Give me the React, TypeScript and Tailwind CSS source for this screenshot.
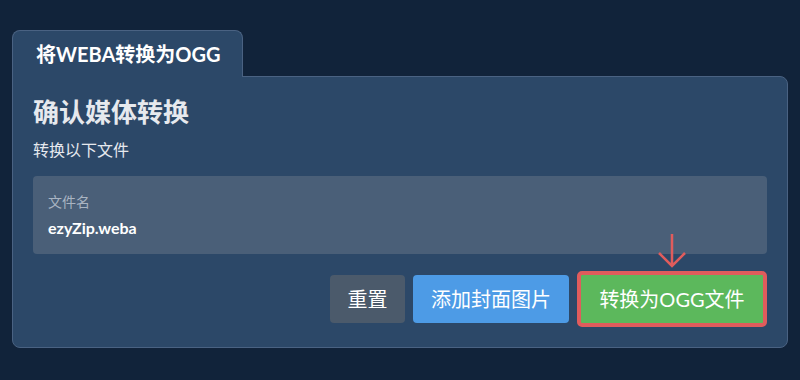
import React from "react";

export default function App() {
  const font = { fontFamily: 'Lato, "Noto Sans CJK SC", sans-serif' };
  return (
    <div className="w-[800px] h-[380px] bg-[#11233a] pt-[30px] px-[12px]" style={font}>
      <div className="flex">
        <div className="h-[47px] w-[231px] bg-[#2c4868] border border-b-0 border-[#4a6282] rounded-t-[8px] flex items-center pl-[23px] text-white text-[20px] font-bold relative z-10 -mb-px">
          将WEBA转换为OGG
        </div>
      </div>
      <div className="w-[776px] h-[272px] bg-[#2c4868] border border-[#4a6282] rounded-b-[8px] rounded-tr-[8px] px-[20px] pt-[19px]">
        <div className="text-[#e6e9ee] text-[26px] font-bold leading-[32px]">确认媒体转换</div>
        <div className="text-[#e6e9ee] text-[16px] leading-[22px] mt-[11px]">转换以下文件</div>
        <div className="mt-[15px] h-[78px] bg-[#4a5f78] rounded-[4px] px-[15px] pt-[16px]">
          <div className="text-[#a9b4c2] text-[14px] leading-[20px]">文件名</div>
          <div className="text-white text-[16px] font-bold leading-[22px] mt-[5px]">ezyZip.weba</div>
        </div>
        <div className="flex justify-end items-center gap-[8px] mt-[17px] relative">
          <button className="h-[48px] w-[75px] bg-[#4b5a6b] text-white text-[20px] rounded-[4px]">重置</button>
          <button className="h-[48px] w-[156px] bg-[#4d9be6] text-white text-[20px] rounded-[4px]">添加封面图片</button>
          <div className="relative">
            <svg className="absolute left-[80px] top-[-38px]" width="30" height="36" viewBox="0 0 30 36" fill="none">
              <path d="M15 1 V33 M2 20 L15 33 L28 20" stroke="#e05c5c" strokeWidth="2.5" />
            </svg>
            <button className="h-[56px] w-[190px] bg-[#5cb85c] text-white text-[20px] rounded-[5px] border-[4px] border-[#e05c5c]">转换为OGG文件</button>
          </div>
        </div>
      </div>
    </div>
  );
}
